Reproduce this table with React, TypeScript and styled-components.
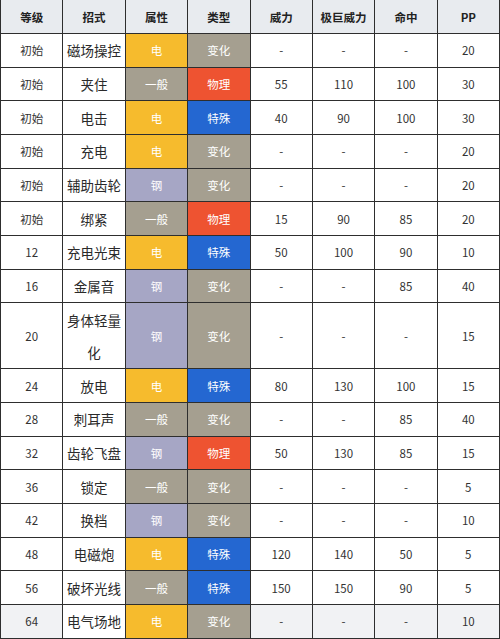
import React from "react";
import styled, { createGlobalStyle, css } from "styled-components";

const GlobalStyle = createGlobalStyle`
  html, body { margin: 0; padding: 0; background: #ffffff; }
  body {
    font-family: "Noto Sans CJK SC", "Noto Sans", sans-serif;
    color: #333333;
  }
`;

type Tone = "电" | "一般" | "钢" | "变化" | "物理" | "特殊";

const toneColors: Record<Tone, string> = {
  电: "#f6bb2d",
  一般: "#a59f90",
  钢: "#a6a6c5",
  变化: "#a59f90",
  物理: "#ee5331",
  特殊: "#2467d1",
};

interface Move {
  lv: string;
  name: string;
  attr: Tone;
  kind: Tone;
  power: string;
  maxPower: string;
  acc: string;
  pp: string;
  tall?: boolean;
  hover?: boolean;
}

const moves: Move[] = [
  { lv: "初始", name: "磁场操控", attr: "电", kind: "变化", power: "-", maxPower: "-", acc: "-", pp: "20" },
  { lv: "初始", name: "夹住", attr: "一般", kind: "物理", power: "55", maxPower: "110", acc: "100", pp: "30" },
  { lv: "初始", name: "电击", attr: "电", kind: "特殊", power: "40", maxPower: "90", acc: "100", pp: "30" },
  { lv: "初始", name: "充电", attr: "电", kind: "变化", power: "-", maxPower: "-", acc: "-", pp: "20" },
  { lv: "初始", name: "辅助齿轮", attr: "钢", kind: "变化", power: "-", maxPower: "-", acc: "-", pp: "20" },
  { lv: "初始", name: "绑紧", attr: "一般", kind: "物理", power: "15", maxPower: "90", acc: "85", pp: "20" },
  { lv: "12", name: "充电光束", attr: "电", kind: "特殊", power: "50", maxPower: "100", acc: "90", pp: "10" },
  { lv: "16", name: "金属音", attr: "钢", kind: "变化", power: "-", maxPower: "-", acc: "85", pp: "40" },
  { lv: "20", name: "身体轻量化", attr: "钢", kind: "变化", power: "-", maxPower: "-", acc: "-", pp: "15", tall: true },
  { lv: "24", name: "放电", attr: "电", kind: "特殊", power: "80", maxPower: "130", acc: "100", pp: "15" },
  { lv: "28", name: "刺耳声", attr: "一般", kind: "变化", power: "-", maxPower: "-", acc: "85", pp: "40" },
  { lv: "32", name: "齿轮飞盘", attr: "钢", kind: "物理", power: "50", maxPower: "130", acc: "85", pp: "15" },
  { lv: "36", name: "锁定", attr: "一般", kind: "变化", power: "-", maxPower: "-", acc: "-", pp: "5" },
  { lv: "42", name: "换档", attr: "钢", kind: "变化", power: "-", maxPower: "-", acc: "-", pp: "10" },
  { lv: "48", name: "电磁炮", attr: "电", kind: "特殊", power: "120", maxPower: "140", acc: "50", pp: "5" },
  { lv: "56", name: "破坏光线", attr: "一般", kind: "特殊", power: "150", maxPower: "150", acc: "90", pp: "5" },
  { lv: "64", name: "电气场地", attr: "电", kind: "变化", power: "-", maxPower: "-", acc: "-", pp: "10", hover: true },
];

const headers = ["等级", "招式", "属性", "类型", "威力", "极巨威力", "命中", "PP"];

const Table = styled.div<{ $rows: string }>`
  display: grid;
  grid-template-columns: repeat(8, 1fr);
  grid-template-rows: ${(p) => p.$rows};
  width: 500px;
  box-sizing: border-box;
  border-left: 1px solid #2e2e2e;
`;

const CellBase = css`
  display: flex;
  align-items: center;
  justify-content: center;
  text-align: center;
  box-sizing: border-box;
  border-right: 1px solid #2e2e2e;
  border-bottom: 1px solid #2e2e2e;
  min-width: 0;
`;

const HeadCell = styled.div`
  ${CellBase}
  background: #e8ebef;
  color: #222222;
  font-size: 11.5px;
  font-weight: 700;
`;

const DataCell = styled.div<{ $muted?: boolean }>`
  ${CellBase}
  background: ${(p) => (p.$muted ? "#f1f2f4" : "#ffffff")};
  color: #333333;
  font-size: 11.5px;
`;

const NameCell = styled.div`
  ${CellBase}
  background: #ffffff;
  color: #2a2a2a;
  font-size: 13.5px;
  line-height: 32px;
  padding: 0 2px;
  word-break: break-all;
`;

const ToneCell = styled.div<{ $color: string }>`
  ${CellBase}
  background: ${(p) => p.$color};
  color: #ffffff;
  font-size: 11.5px;
`;

export default function App() {
  const rowHeights = ["34px", ...moves.map((m) => (m.tall ? "66px" : "33.67px"))].join(" ");
  return (
    <>
      <GlobalStyle />
      <Table $rows={rowHeights}>
        {headers.map((h) => (
          <HeadCell key={h}>{h}</HeadCell>
        ))}
        {moves.map((m, i) => (
          <React.Fragment key={i}>
            <DataCell $muted={m.hover}>{m.lv}</DataCell>
            <NameCell>{m.name}</NameCell>
            <ToneCell $color={toneColors[m.attr]}>{m.attr}</ToneCell>
            <ToneCell $color={toneColors[m.kind]}>{m.kind}</ToneCell>
            <DataCell $muted={m.hover}>{m.power}</DataCell>
            <DataCell $muted={m.hover}>{m.maxPower}</DataCell>
            <DataCell $muted={m.hover}>{m.acc}</DataCell>
            <DataCell $muted={m.hover}>{m.pp}</DataCell>
          </React.Fragment>
        ))}
      </Table>
    </>
  );
}
